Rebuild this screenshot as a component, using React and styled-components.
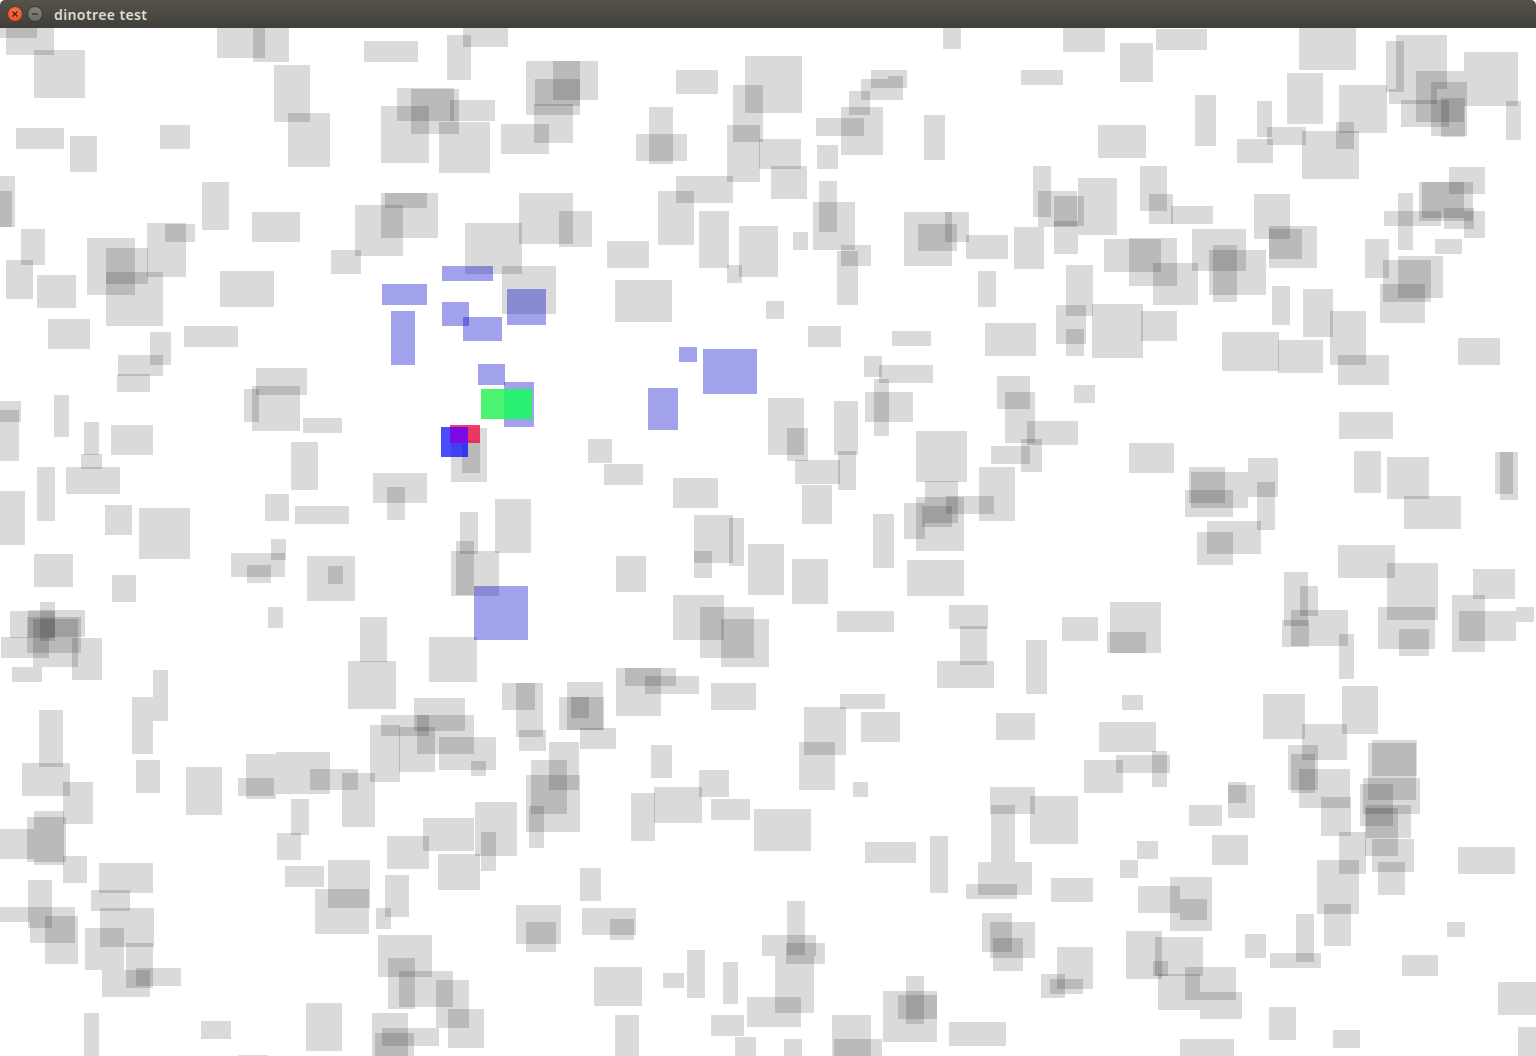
import React from 'react'
import styled, { createGlobalStyle } from 'styled-components'

const GlobalStyle = createGlobalStyle`
  html, body {
    margin: 0;
    padding: 0;
    background: #fff;
    overflow: hidden;
  }
`

const Window = styled.div`
  display: flex;
  flex-direction: column;
  width: 1536px;
  height: 1056px;
  background: #fff;
  overflow: hidden;
`

const TitleBar = styled.div`
  display: flex;
  align-items: center;
  flex: 0 0 28px;
  padding-left: 7px;
  border-radius: 5px 5px 0 0;
  background: linear-gradient(#57534b, #3f3e39);
`

const WindowButton = styled.div`
  display: flex;
  align-items: center;
  justify-content: center;
  width: 16px;
  height: 16px;
  margin-right: 4px;
  border-radius: 50%;
  box-sizing: border-box;
  border: 1px solid ${(props) => (props.$close ? '#6e3420' : '#3a3934')};
  background: ${(props) =>
    props.$close
      ? 'radial-gradient(circle at 50% 35%, #f5784a, #e2491f)'
      : 'linear-gradient(#85827a, #6b6962)'};
`

const Title = styled.div`
  margin-left: 7px;
  color: #dfdbd2;
  font-family: 'Noto Sans', sans-serif;
  font-size: 14px;
  font-weight: 600;
  letter-spacing: 0.4px;
`

const Scene = styled.svg`
  display: block;
  flex: 0 0 1028px;
  width: 1536px;
  height: 1028px;
  shape-rendering: crispEdges;
`

const fills = {
  gray: 'rgba(0, 0, 0, 0.145)',
  blue: 'rgba(3, 0, 204, 0.37)',
  green: 'rgba(0, 238, 53, 0.7)',
  greenOverBlue: '#2af072',
  red: 'rgba(236, 15, 69, 0.8)',
  hit: 'rgba(0, 0, 255, 0.7)',
  hitOverRed: '#7a0ae8',
}

const Box = styled.rect`
  fill: ${(props) => fills[props.$kind]};
`

// x, y, w, h in page pixels
const grayBoxes = [
  [0,28,37,10],[6,28,48,27],[34,50,51,48],[217,28,48,30],[253,28,36,34],[364,41,54,21],[447,35,24,45],[463,28,45,19],
  [274,65,36,57],[288,113,42,54],[16,128,48,21],[70,136,27,36],[160,125,30,24],[397,88,57,33],[411,89,48,45],[381,106,48,57],
  [450,100,45,21],[439,122,51,51],[501,124,48,30],[0,176,15,51],[0,191,12,36],[202,182,27,48],[252,212,48,30],[381,193,57,45],
  [385,193,42,15],[355,205,48,51],[331,250,30,24],[21,229,24,36],[6,260,27,39],[37,275,39,33],[87,238,48,57],[106,248,42,36],
  [106,272,57,54],[147,223,39,54],[165,224,30,18],[220,271,54,36],[48,319,42,30],[184,326,54,21],[150,332,21,33],[118,355,45,21],
  [117,374,33,18],[256,368,51,27],[252,386,48,45],[244,389,15,33],[303,418,39,15],[451,428,36,54],[462,440,18,33],
  [526,61,54,54],[553,61,45,39],[535,79,45,27],[534,104,39,39],[676,70,42,24],[745,56,57,57],[733,85,30,57],[727,125,33,57],
  [759,139,42,30],[771,166,36,33],[649,107,24,57],[636,134,51,27],[943,28,18,21],[871,70,36,18],[861,79,27,21],[888,76,15,24],
  [849,91,21,24],[841,107,42,48],[816,118,48,18],[817,145,21,24],[924,115,21,45],[1021,70,42,15],[676,176,57,27],[658,191,36,54],
  [699,211,30,57],[739,226,39,51],[727,265,15,18],[793,232,15,18],[819,181,18,51],[813,202,42,48],[841,245,30,21],[837,251,21,54],
  [904,212,48,54],[945,212,24,30],[918,224,39,27],[966,235,42,24],[1014,227,30,42],[978,271,18,36],[808,326,33,21],[892,331,39,15],
  [985,323,51,33],[864,356,18,21],[879,365,54,18],[465,223,57,51],[519,193,54,51],[559,211,33,36],[502,266,54,48],[607,241,42,27],
  [615,280,57,42],[766,301,18,18],
  [1063,28,42,24],[1156,29,51,21],[1120,43,33,39],[1299,28,57,42],[1386,41,18,51],[1396,35,51,54],[1389,89,48,15],[1416,71,48,51],
  [1431,82,36,54],[1401,100,48,27],[1441,98,24,39],[1464,52,54,54],[1506,101,15,39],[1287,73,36,51],[1339,85,48,48],[1336,122,18,27],
  [1302,131,57,48],[1267,127,39,18],[1257,101,15,36],[1237,139,36,24],[1195,95,21,51],[1098,125,48,33],[1033,166,18,51],[1038,191,39,36],
  [1054,196,30,30],[1078,178,39,57],[1054,221,24,33],[1140,166,27,45],[1149,194,24,30],[1171,206,42,18],[1254,194,36,45],[1269,226,48,42],
  [1269,229,33,30],[1192,229,54,42],[1209,250,57,45],[1213,245,24,57],[1104,239,57,33],[1129,238,48,48],[1153,263,45,42],[1066,265,27,51],
  [1056,305,30,39],[1092,304,51,54],[1141,311,36,30],[1066,329,18,27],[1272,286,18,39],[1303,289,30,48],[1330,311,36,54],[1338,355,51,30],
  [1222,332,57,39],[1278,340,45,33],[1458,338,42,27],[1449,167,36,27],[1419,182,54,39],[1422,182,42,36],[1444,208,30,21],[1464,211,21,27],
  [1398,193,15,57],[1384,211,57,15],[1435,239,27,15],[1365,239,24,39],[1398,256,45,42],[1383,260,48,42],[1380,284,45,39],
  [0,401,21,21],[0,410,19,51],[54,395,15,42],[84,422,15,33],[111,425,42,30],[81,454,21,15],[66,467,54,27],[37,467,18,54],
  [0,491,25,54],[105,505,27,30],[139,508,51,51],[34,554,39,33],[112,575,24,27],[291,442,27,48],[265,494,24,27],[295,506,54,18],
  [373,473,54,30],[387,487,18,33],[231,553,54,24],[271,539,15,21],[247,565,24,18],[307,556,48,45],[328,566,15,18],[268,607,15,21],
  [460,512,18,42],[495,499,36,54],[451,551,48,45],[456,541,18,54],[429,637,48,45],[360,617,27,45],[348,661,48,48],[502,683,33,27],
  [516,683,27,54],[414,698,51,33],[381,715,48,21],[417,715,57,39],[370,725,30,57],[399,727,36,45],[439,737,57,33],[471,761,15,15],
  [153,670,15,51],[132,697,21,57],[39,710,24,57],[12,667,30,15],[40,602,15,39],[28,610,57,27],[27,617,54,36],[33,619,45,48],
  [1,637,48,21],[72,638,30,42],[10,611,45,27],
  [22,763,48,33],[63,782,30,42],[34,811,30,54],[27,817,39,45],[0,829,34,30],[63,856,24,27],[136,760,24,33],[186,767,36,48],
  [238,778,36,18],[246,754,30,45],[276,752,54,42],[310,769,48,21],[342,773,33,54],[291,799,18,36],[277,833,24,27],[285,866,39,21],
  [328,860,42,48],[315,889,54,45],[387,836,42,33],[423,818,51,33],[475,802,42,54],[481,832,15,39],[438,854,42,36],[385,875,24,42],
  [376,908,15,21],[378,935,54,42],[388,958,27,51],[399,971,54,36],[436,980,33,48],[448,1009,36,39],[372,1013,36,43],[382,1028,57,18],
  [375,1033,39,23],[306,1003,36,48],[201,1021,30,18],[238,1055,30,1],[84,1013,15,43],[28,880,24,48],[0,907,30,15],[30,907,45,36],
  [45,916,33,48],[99,863,54,30],[91,890,39,21],[100,908,54,39],[85,928,39,42],[126,943,27,45],[102,970,48,27],[136,968,45,18],
  [567,682,36,48],[559,697,45,33],[571,697,18,21],[519,730,27,21],[580,728,36,21],[616,668,45,48],[625,668,51,18],[645,676,54,18],
  [711,683,45,27],[549,742,30,48],[531,760,36,54],[526,775,54,57],[529,806,15,42],[631,793,24,48],[654,787,48,36],[699,770,30,27],
  [711,799,39,21],[754,809,57,42],[651,745,21,33],[804,707,42,48],[799,742,36,48],[840,694,45,15],[861,712,39,30],[853,782,15,15],
  [996,713,39,27],[990,787,45,27],[991,805,24,57],[978,862,54,33],[966,884,51,15],[930,836,18,57],[865,842,51,21],[580,868,21,33],
  [516,905,45,39],[526,922,30,30],[582,908,54,27],[610,919,24,21],[594,967,48,39],[663,973,21,15],[687,950,18,48],[723,962,15,42],
  [787,901,18,54],[762,935,54,21],[786,943,39,21],[775,956,39,57],[747,997,54,30],[711,1015,33,21],[735,1037,21,19],[784,1039,18,17],
  [615,1015,24,41],[832,1015,39,41],[834,1039,48,17],[883,991,54,51],[898,995,39,24],[906,976,18,48],[949,1022,57,24],
  [588,439,24,24],[604,464,39,21],[673,478,45,30],[694,515,39,48],[729,518,15,48],[694,551,18,27],[748,544,36,51],[792,559,36,45],
  [616,556,30,36],[768,398,36,57],[787,428,21,33],[795,460,45,24],[834,401,24,54],[838,451,18,39],[802,485,30,39],[874,379,15,57],
  [865,392,48,30],[916,431,51,51],[925,481,33,42],[916,497,48,54],[904,503,21,36],[922,506,30,21],[946,496,48,18],[979,467,36,54],
  [873,514,21,54],[907,560,57,36],[997,376,33,33],[1005,392,30,51],[1027,421,51,24],[991,446,39,18],[1021,439,21,33],[1074,385,21,18],
  [1129,443,45,30],[1185,490,48,27],[1189,467,36,36],[1191,472,57,36],[1248,458,30,39],[1257,482,18,48],[1207,521,54,33],[1197,532,36,33],
  [1026,640,21,54],[1062,617,36,24],[1110,602,51,51],[1107,632,39,21],[1122,695,21,15],[949,605,39,24],[960,626,27,39],[937,661,57,27],
  [837,611,57,21],[673,595,51,45],[700,607,54,51],[721,619,48,48],
  [1339,412,54,27],[1354,451,27,42],[1387,457,42,42],[1404,496,57,33],[1495,452,18,42],[1500,452,18,48],[1338,545,57,33],[1387,563,51,57],
  [1378,607,57,42],[1399,629,30,27],[1473,569,42,30],[1452,595,33,57],[1459,611,57,30],[1516,607,18,15],[1284,572,24,54],[1300,586,18,30],
  [1291,610,57,36],[1282,620,27,27],[1339,634,15,45],[1263,694,42,45],[1342,686,36,48],
  [1302,724,45,36],[1288,745,30,45],[1291,754,24,39],[1299,769,51,39],[1321,797,30,39],[1339,832,27,42],[1317,860,42,54],[1324,904,27,42],
  [1296,914,18,48],[1270,953,51,15],[1245,934,21,24],[1269,1007,27,33],[1333,1030,27,18],[1180,1039,54,17],[1372,740,45,36],[1368,743,48,57],
  [1363,778,57,36],[1360,784,33,42],[1366,805,45,33],[1365,808,33,48],[1372,839,42,33],[1378,862,27,33],[1458,847,57,27],[1447,922,18,15],
  [1402,955,36,21],[1498,982,38,33],[1518,1027,18,29],[1099,722,57,30],[1116,755,54,18],[1152,751,15,36],[1084,760,39,33],[1030,796,48,48],
  [1228,785,27,33],[1228,782,18,21],[1189,805,33,21],[1212,835,36,30],[1137,841,21,18],[1120,860,18,18],[1051,878,42,24],[1138,886,42,27],
  [1170,877,42,54],[1180,899,27,21],[982,913,30,39],[990,922,45,36],[993,938,30,33],[1126,931,36,48],[1155,937,48,39],[1153,961,15,15],
  [1158,974,42,36],[1185,967,51,33],[1200,992,42,27],[1057,947,36,42],[1041,974,24,24],[1050,979,33,15],
]

const blueBoxes = [
  [442,266,51,15],[382,284,45,21],[391,311,24,54],[442,302,27,24],[463,317,39,24],[507,289,39,36],[478,364,27,21],[504,382,30,45],
  [703,349,54,45],[679,347,18,15],[648,388,30,42],[474,586,54,54],
]

const TOP = 28

const boxes = (list, kind) =>
  list.map(([x, y, w, h]) => (
    <Box key={`${kind}-${x}-${y}-${w}`} $kind={kind} x={x} y={y - TOP} width={w} height={h} />
  ))

const App = () => (
  <Window>
    <GlobalStyle />
    <TitleBar>
      <WindowButton $close>
        <svg width="8" height="8" viewBox="0 0 8 8">
          <path d="M1.5 1.5 6.5 6.5M6.5 1.5 1.5 6.5" stroke="#5c1d08" strokeWidth="1.4" fill="none" />
        </svg>
      </WindowButton>
      <WindowButton>
        <svg width="8" height="8" viewBox="0 0 8 8">
          <path d="M1 4H7" stroke="#3a3934" strokeWidth="1.4" fill="none" />
        </svg>
      </WindowButton>
      <Title>dinotree test</Title>
    </TitleBar>
    <Scene viewBox="0 0 1536 1028">
      {boxes(grayBoxes, 'gray')}
      {boxes(blueBoxes, 'blue')}
      {boxes([[481, 389, 51, 30]], 'green')}
      {boxes([[504, 389, 28, 30]], 'greenOverBlue')}
      {boxes([[450, 425, 30, 18]], 'red')}
      {boxes([[441, 427, 27, 30]], 'hit')}
      {boxes([[450, 427, 18, 16]], 'hitOverRed')}
    </Scene>
  </Window>
)

export default App
